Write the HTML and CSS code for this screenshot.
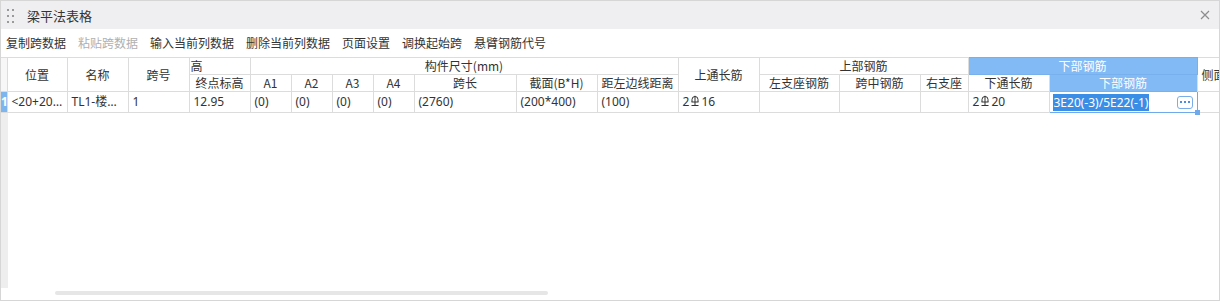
FILE: index.html
```html
<!DOCTYPE html>
<html lang="zh-CN">
<head>
    <meta charset="UTF-8">
    <title>梁平法表格</title>
    <link rel="stylesheet" href="styles.css">
</head>
<body>
    <div class="window">
        <div class="titlebar">
            <svg class="grip" width="8" height="14" viewBox="0 0 8 14">
                <rect x="0" y="0" width="2" height="2" fill="#9a9a9a"/>
                <rect x="5" y="0" width="2" height="2" fill="#9a9a9a"/>
                <rect x="0" y="6" width="2" height="2" fill="#9a9a9a"/>
                <rect x="5" y="6" width="2" height="2" fill="#9a9a9a"/>
                <rect x="0" y="12" width="2" height="2" fill="#9a9a9a"/>
                <rect x="5" y="12" width="2" height="2" fill="#9a9a9a"/>
            </svg>
            <span class="title">梁平法表格</span>
            <svg class="close" width="10" height="10" viewBox="0 0 10 10">
                <path d="M1 1L9 9M9 1L1 9" stroke="#8c8c8c" stroke-width="1.2" fill="none"/>
            </svg>
        </div>

        <div class="toolbar">
            <span class="tool">复制跨数据</span>
            <span class="tool disabled">粘贴跨数据</span>
            <span class="tool">输入当前列数据</span>
            <span class="tool">删除当前列数据</span>
            <span class="tool">页面设置</span>
            <span class="tool">调换起始跨</span>
            <span class="tool">悬臂钢筋代号</span>
        </div>

        <div class="grid">
            <table class="sheet">
                <colgroup>
                    <col style="width:6px">
                    <col style="width:60px">
                    <col style="width:61px">
                    <col style="width:61px">
                    <col style="width:61px">
                    <col style="width:41px">
                    <col style="width:41px">
                    <col style="width:41px">
                    <col style="width:41px">
                    <col style="width:102px">
                    <col style="width:81px">
                    <col style="width:81px">
                    <col style="width:81px">
                    <col style="width:80px">
                    <col style="width:81px">
                    <col style="width:48px">
                    <col style="width:81px">
                    <col style="width:148px">
                    <col style="width:90px">
                </colgroup>
                <thead>
                    <tr class="head-1">
                        <th class="corner" rowspan="2"></th>
                        <th rowspan="2">位置</th>
                        <th rowspan="2">名称</th>
                        <th rowspan="2">跨号</th>
                        <th class="clipped">高</th>
                        <th colspan="7">构件尺寸(mm)</th>
                        <th rowspan="2">上通长筋</th>
                        <th colspan="3">上部钢筋</th>
                        <th colspan="2" class="active">下部钢筋</th>
                        <th rowspan="2" class="clipped side">侧面钢筋</th>
                    </tr>
                    <tr class="head-2">
                        <th>终点标高</th>
                        <th>A1</th>
                        <th>A2</th>
                        <th>A3</th>
                        <th>A4</th>
                        <th>跨长</th>
                        <th>截面(B*H)</th>
                        <th>距左边线距离</th>
                        <th>左支座钢筋</th>
                        <th>跨中钢筋</th>
                        <th>右支座</th>
                        <th>下通长筋</th>
                        <th class="active">下部钢筋</th>
                    </tr>
                </thead>
                <tbody>
                    <tr class="row">
                        <td class="row-no">1</td>
                        <td>&lt;20+2050,2350&gt;</td>
                        <td>TL1-楼梯梁</td>
                        <td>1</td>
                        <td>12.95</td>
                        <td>(0)</td>
                        <td>(0)</td>
                        <td>(0)</td>
                        <td>(0)</td>
                        <td>(2760)</td>
                        <td>(200*400)</td>
                        <td>(100)</td>
                        <td>2<svg class="bar" width="10" height="12" viewBox="0 0 10 12"><path d="M2 7V4.5A3 3 0 0 1 8 4.5V7M1.5 7H8.5M5 0.8V10.5M1.5 10.5H8.5" stroke="#333" stroke-width="1" fill="none"/></svg>16</td>
                        <td></td>
                        <td></td>
                        <td></td>
                        <td>2<svg class="bar" width="10" height="12" viewBox="0 0 10 12"><path d="M2 7V4.5A3 3 0 0 1 8 4.5V7M1.5 7H8.5M5 0.8V10.5M1.5 10.5H8.5" stroke="#333" stroke-width="1" fill="none"/></svg>20</td>
                        <td class="editing">
                            <div class="editor">
                                <span class="selected">3E20(-3)/5E22(-1)</span>
                                <span class="more"><i></i><i></i><i></i></span>
                            </div>
                            <span class="handle"></span>
                        </td>
                        <td></td>
                    </tr>
                </tbody>
            </table>
            <div class="filler"></div>
        </div>

        <div class="hscroll">
            <div class="thumb"></div>
        </div>
    </div>
</body>
</html>
```

FILE: styles.css
```css
* {
    box-sizing: border-box;
    margin: 0;
    padding: 0;
}

body {
    font-family: "Noto Sans", "Noto Sans CJK SC", sans-serif;
    font-size: 12px;
    color: #333;
    background: #fff;
}

.window {
    width: 1220px;
    height: 301px;
    border: 1px solid #d6d6d6;
    display: flex;
    flex-direction: column;
    overflow: hidden;
}

.titlebar {
    height: 28px;
    flex-shrink: 0;
    background: #efeff1;
    display: flex;
    align-items: center;
    padding: 0 9px 0 6px;
}

.grip {
    display: block;
    margin-top: 2px;
}

.title {
    margin-left: 12px;
    font-family: "Noto Sans CJK SC", sans-serif;
    font-size: 13px;
    color: #333;
}

.close {
    margin-left: auto;
    display: block;
}

.toolbar {
    height: 28px;
    flex-shrink: 0;
    display: flex;
    align-items: center;
    gap: 12px;
    padding-left: 5px;
    font-family: "Noto Sans CJK SC", sans-serif;
}

.tool {
    color: #333;
    line-height: 14px;
}

.tool.disabled {
    color: #b0b0b0;
}

.grid {
    flex: 1;
    display: flex;
    flex-direction: column;
    overflow: hidden;
}

.sheet {
    table-layout: fixed;
    border-collapse: collapse;
    width: 1276px;
    flex-shrink: 0;
}

.sheet th,
.sheet td {
    border: 1px solid #dcdcdc;
    white-space: nowrap;
    overflow: hidden;
    text-overflow: ellipsis;
    font-weight: normal;
    line-height: 14px;
}

.sheet th {
    text-align: center;
    padding: 0 2px;
    font-family: "Noto Sans CJK SC", sans-serif;
    color: #333;
}

.sheet th.clipped {
    text-align: left;
    padding-left: 1px;
    text-overflow: clip;
}

.sheet th.side {
    padding-left: 4px;
}

.head-1 th {
    height: 17px;
}

.head-2 th {
    height: 17px;
}

.sheet th.corner {
    background: #f7f7f7;
    border-left: none;
}

.sheet th.active {
    background: #82baf6;
    color: #fff;
    border-color: #78b0ee;
}

.row td {
    height: 21px;
    padding: 0 4px;
    text-align: left;
}

.sheet td.row-no {
    background: #7db5ef;
    color: #fff;
    padding: 0;
    text-align: center;
    font-weight: bold;
    border-left: none;
}

.bar {
    display: inline-block;
    vertical-align: -1px;
    margin: 0 1px;
}

.sheet td.editing {
    border: 1px solid #6ea9ec;
    padding: 0 3px;
    position: relative;
    overflow: visible;
}

.editor {
    display: flex;
    align-items: center;
    height: 18px;
}

.selected {
    background: #3a8ee6;
    color: #fff;
    line-height: 17px;
    padding: 0 1px;
}

.more {
    margin-left: auto;
    margin-right: 1px;
    width: 16px;
    height: 13px;
    border: 1px solid #7aaee8;
    border-radius: 3px;
    background: #fff;
    display: flex;
    align-items: center;
    justify-content: center;
    gap: 2px;
}

.more i {
    width: 2px;
    height: 2px;
    background: #4a8ee0;
    display: block;
}

.handle {
    position: absolute;
    right: -3px;
    bottom: -3px;
    width: 5px;
    height: 5px;
    background: #6ea9ec;
}

.filler {
    flex: 1;
    width: 7px;
    background: #eeeeee;
}

.hscroll {
    height: 12px;
    flex-shrink: 0;
    padding: 3px 0 0 54px;
}

.thumb {
    width: 493px;
    height: 4px;
    border-radius: 2px;
    background: #e6e6e6;
}
```
